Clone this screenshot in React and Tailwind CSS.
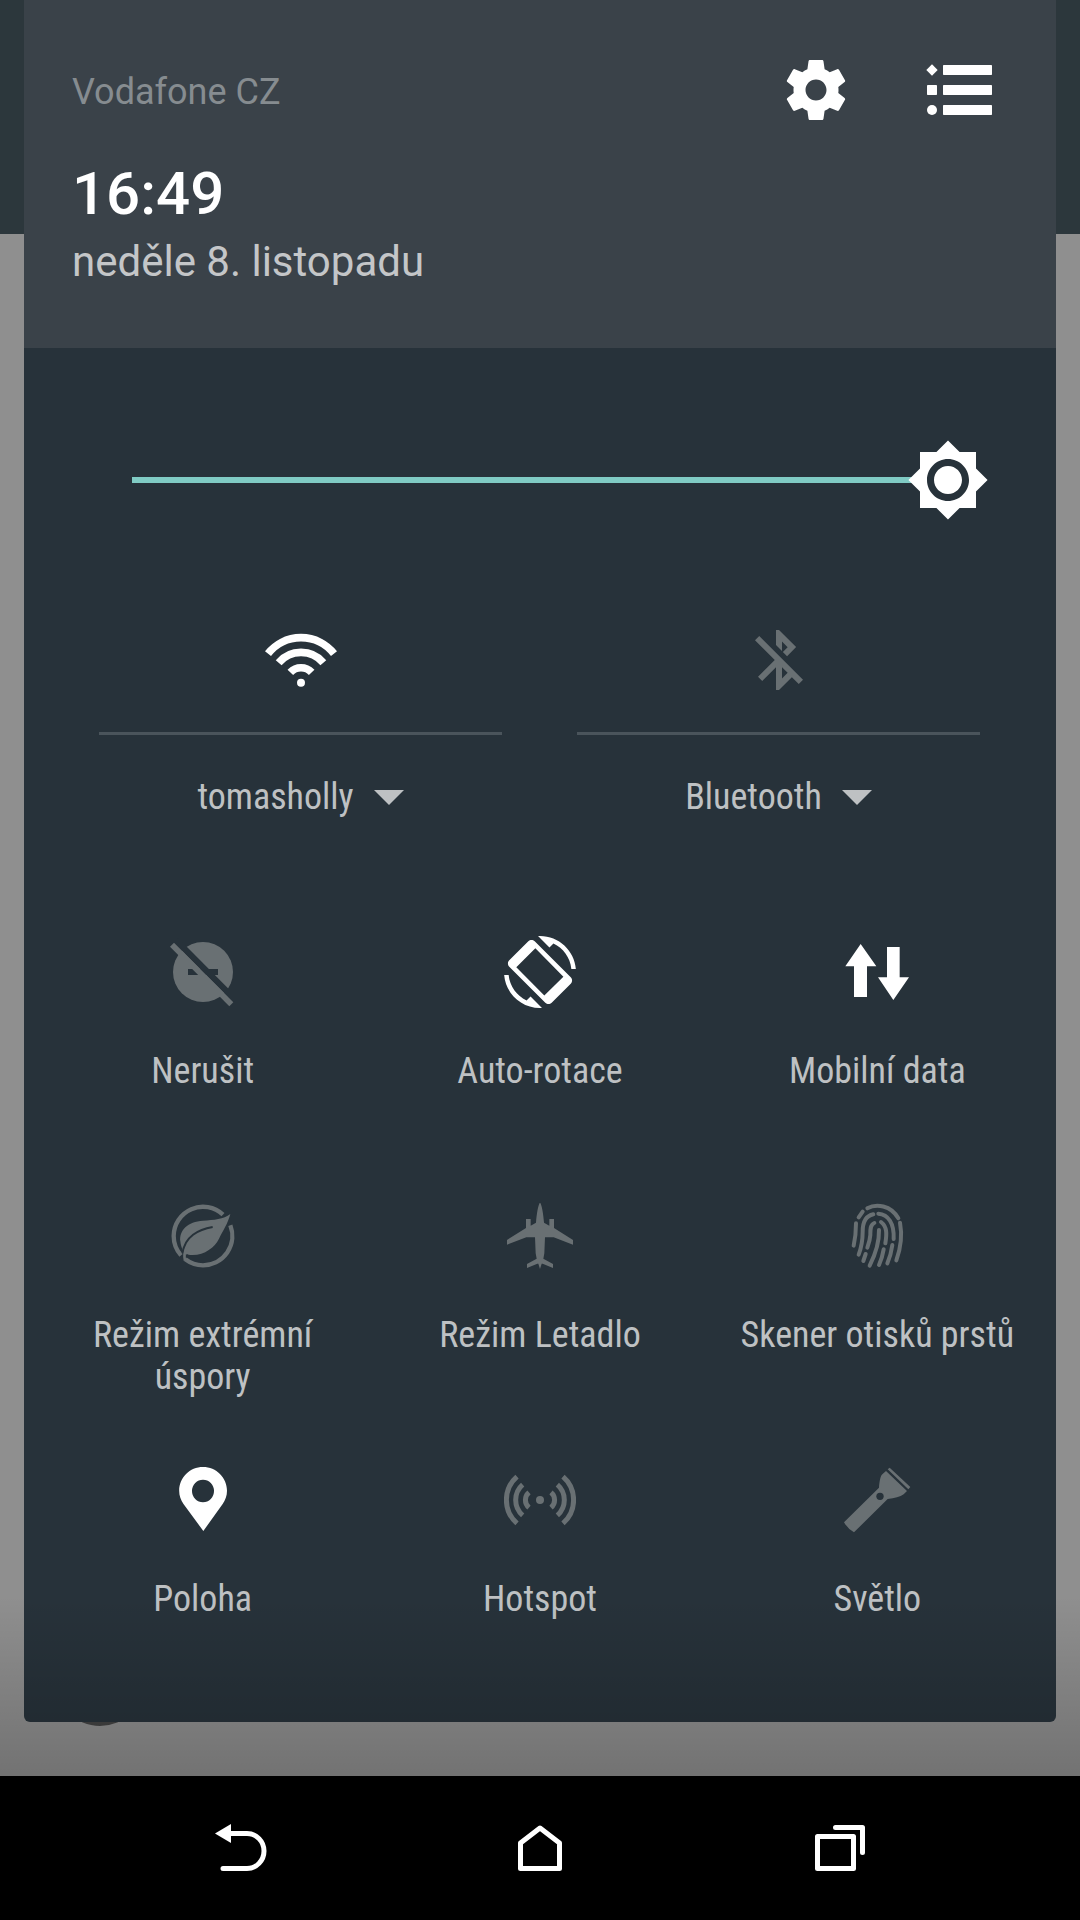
import React, { useState } from "react";

const Icon = ({ children, box = 216, className = "size-[72px]" }) => (
  <svg
    viewBox={`0 0 ${box} ${box}`}
    fill="currentColor"
    aria-hidden="true"
    className={`shrink-0 ${className}`}
  >
    {children}
  </svg>
);

const Strokes = ({ paths, width }) => (
  <g fill="none" stroke="currentColor" strokeWidth={width}>
    {paths.map((d) => (
      <path key={d} d={d} />
    ))}
  </g>
);

const SettingsIcon = () => (
  <Icon box={24}>
    <path d="M19.43 12.98c.04-.32.07-.64.07-.98s-.03-.66-.07-.98l2.11-1.65c.19-.15.24-.42.12-.64l-2-3.46c-.12-.22-.39-.3-.61-.22l-2.49 1c-.52-.4-1.08-.73-1.69-.98l-.38-2.65C14.46 2.18 14.25 2 14 2h-4c-.25 0-.46.18-.49.42l-.38 2.65c-.61.25-1.17.59-1.69.98l-2.49-1c-.23-.09-.49 0-.61.22l-2 3.46c-.13.22-.07.49.12.64l2.11 1.65c-.04.32-.07.65-.07.98s.03.66.07.98l-2.11 1.65c-.19.15-.24.42-.12.64l2 3.46c.12.22.39.3.61.22l2.49-1c.52.4 1.08.73 1.69.98l.38 2.65c.03.24.24.42.49.42h4c.25 0 .46-.18.49-.42l.38-2.65c.61-.25 1.17-.59 1.69-.98l2.49 1c.23.09.49 0 .61-.22l2-3.46c.12-.22.07-.49-.12-.64l-2.11-1.65zM12 15.5c-1.93 0-3.5-1.57-3.5-3.5s1.57-3.5 3.5-3.5 3.5 1.57 3.5 3.5-1.57 3.5-3.5 3.5z" />
  </Icon>
);

const ListIcon = () => (
  <Icon>
    <path d="M24 31l17 17-17 17L7 48z" />
    <rect x="9" y="93" width="30" height="30" rx="2" />
    <circle cx="24" cy="168" r="15" />
    <rect x="57" y="33" width="147" height="30" rx="2" />
    <rect x="57" y="93" width="147" height="30" rx="2" />
    <rect x="57" y="153" width="147" height="30" rx="2" />
  </Icon>
);

const BrightnessIcon = () => (
  <Icon box={24} className="size-[84px]">
    <circle cx="12" cy="12" r="7" className="text-[#27323a]" />
    <path d="M20 8.69V4h-4.69L12 .69 8.69 4H4v4.69L.69 12 4 15.31V20h4.69L12 23.31 15.31 20H20v-4.69L23.31 12 20 8.69zM12 18c-3.31 0-6-2.69-6-6s2.69-6 6-6 6 2.69 6 6-2.69 6-6 6zm0-10c-2.21 0-4 1.79-4 4s1.79 4 4 4 4-1.79 4-4-1.79-4-4-4z" />
  </Icon>
);

const WifiIcon = () => (
  <Icon>
    <Strokes
      width={23}
      paths={[
        "M9 89A126 126 0 0 1 207 89",
        "M41 116A88 88 0 0 1 175 116",
        "M76 145A44 44 0 0 1 140 145",
      ]}
    />
    <circle cx="108" cy="176" r="12" />
  </Icon>
);

const BluetoothOffIcon = () => (
  <Icon box={24}>
    <path d="M13 5.83l1.88 1.88-1.6 1.6 1.41 1.41 3.02-3.02L12 2h-1v5.03l2 2v-3.2zM5.41 4L4 5.41 10.59 12 5 17.59 6.41 19 11 14.41V22h1l4.29-4.29 2.3 2.29L20 18.59 5.41 4zM13 18.17v-3.76l1.88 1.88L13 18.17z" />
  </Icon>
);

const DoNotDisturbOffIcon = () => (
  <Icon>
    <circle cx="108" cy="108" r="90" />
    <rect x="63" y="99" width="90" height="18" fill="#27323a" />
    <path fill="#27323a" d="M21 20L199 199l13-13L34 7z" />
    <path d="M21 20L9 32l178 179 12-12z" />
  </Icon>
);

const RotationIcon = () => (
  <Icon box={24}>
    <path d="M16.48 2.52c3.27 1.55 5.61 4.72 5.97 8.48h1.5C23.44 4.84 18.29 0 12 0l-.66.03 3.81 3.81 1.33-1.32zM7.52 21.48C4.25 19.94 1.91 16.76 1.55 13H.05C.56 19.16 5.71 24 12 24l.66-.03-3.81-3.81-1.33 1.32z" />
    <path
      fillRule="evenodd"
      d="M10.23 1.75c-.59-.59-1.54-.59-2.12 0L1.75 8.11c-.59.59-.59 1.54 0 2.12l12.02 12.02c.59.59 1.54.59 2.12 0l6.36-6.36c.59-.59.59-1.54 0-2.12L10.23 1.75zM13.44 19.8L4.1 10.45l6.35-6.35 9.35 9.45z"
    />
  </Icon>
);

const MobileDataIcon = () => (
  <Icon>
    <path d="M59 24l47 67H78v92H39V91H13zM157 192l-46-68h27V33h38v91h28z" />
  </Icon>
);

const LeafIcon = () => (
  <Icon>
    <Strokes
      width={13}
      paths={[
        "M168 44A88 88 0 0 0 20 108A88 88 0 0 0 42 166",
        "M190 76A88 88 0 0 1 108 196A88 88 0 0 1 55 178",
      ]}
    />
    <path d="M190 42C170 58 140 60 108 62C62 64 36 92 40 124C41 136 44 144 50 156C52 163 60 165 75 165C112 166 143 142 156 116C169 90 182 72 190 42z" />
    <path
      d="M137 81C95 88 52 110 47 160"
      fill="none"
      stroke="#27323a"
      strokeWidth="6"
    />
    <path
      d="M54 182C50 165 52 155 60 142"
      fill="none"
      stroke="currentColor"
      strokeWidth="8"
    />
  </Icon>
);

const AirplaneIcon = () => (
  <Icon>
    <path d="M108 8C103 12 98 40 96 68L80 77V57H66V84L9 120V134L67 112H93L95 160L98 176L69 192V204L100 191H103L108 207L113 191H116L147 204V192L118 176L121 160L123 112H149L207 134V120L150 84V57H136V77L120 68C118 40 113 12 108 8z" />
  </Icon>
);

const FingerprintIcon = () => (
  <Icon>
    <g strokeLinecap="round">
      <Strokes
        width={12}
        paths={[
          "M79 25C105 10 150 15 172 55",
          "M53 52L65 35",
          "M45 70C45 95 43 115 38 137",
          "M97 43C72 48 65 70 65 95C65 125 60 145 53 164",
          "M112 41C142 43 160 70 158 117",
          "M100 69C87 74 88 90 88 105C87 120 83 132 79 143",
          "M120 66C138 80 138 100 133 130",
          "M114 90C115 130 102 165 86 197",
          "M74 162L67 183",
          "M128 148Q124 172 114 195",
          "M154 135Q150 165 139 190",
          "M177 68C184 105 179 145 166 181",
        ]}
      />
    </g>
  </Icon>
);

const LocationIcon = () => (
  <Icon>
    <path
      fillRule="evenodd"
      d="M108 9C68 9 36.5 41 36.5 80c0 15 5 28 13 40L109 201l58-81c8-12 13-25 13-40C180 41 148 9 108 9zM108 47a33 34 0 1 1 0 68 33 34 0 1 1 0-68z"
    />
  </Icon>
);

const HotspotIcon = () => (
  <Icon>
    <Strokes
      width={15}
      paths={[
        "M39 38A93 93 0 0 0 39 178",
        "M56 62A61 61 0 0 0 56 154",
        "M75 85A30 30 0 0 0 75 131",
        "M141 85A30 30 0 0 1 141 131",
        "M160 62A61 61 0 0 1 160 154",
        "M177 38A93 93 0 0 1 177 178",
      ]}
    />
    <circle cx="108" cy="108" r="12" />
  </Icon>
);

const FlashlightIcon = () => (
  <Icon>
    <path d="M9 175L114 71C115 55 118 36 124 31L135 21L198 81L188 91Q172 102 140 105L39 205Q20 194 9 175zM140 16l6-5 62 58-6 7z" />
    <circle cx="117" cy="97" r="11" fill="#27323a" />
  </Icon>
);

const connections = [
  { id: "wifi", label: "tomasholly", icon: WifiIcon, active: true },
  { id: "bluetooth", label: "Bluetooth", icon: BluetoothOffIcon },
];

const tiles = [
  { label: "Nerušit", icon: DoNotDisturbOffIcon },
  { label: "Auto-rotace", icon: RotationIcon, active: true },
  { label: "Mobilní data", icon: MobileDataIcon, active: true },
  { label: "Režim extrémní úspory", icon: LeafIcon },
  { label: "Režim Letadlo", icon: AirplaneIcon },
  { label: "Skener otisků prstů", icon: FingerprintIcon },
  { label: "Poloha", icon: LocationIcon, active: true },
  { label: "Hotspot", icon: HotspotIcon },
  { label: "Světlo", icon: FlashlightIcon },
];

const labelClass =
  "font-['Roboto_Condensed','Roboto',sans-serif] text-[36px] leading-[42px] text-[#bec1c3]";

const Header = () => (
  <header className="bg-[#3a4249] pt-[54px] pr-[60px] pb-[61px] pl-12">
    <div className="flex items-center justify-between">
      <p className="pt-1 text-[36px] leading-[42px] text-[#868c90]">
        Vodafone CZ
      </p>
      <div className="flex gap-[72px] text-white">
        <button type="button" aria-label="Nastavení">
          <SettingsIcon />
        </button>
        <button type="button" aria-label="Oznámení">
          <ListIcon />
        </button>
      </div>
    </div>
    <h1 className="mt-[33px] text-[60px] leading-[70px] font-medium text-white">
      16:49
    </h1>
    <p className="mt-2 text-[42px] leading-[50px] text-[#c4c6c8]">
      neděle 8. listopadu
    </p>
  </header>
);

const BrightnessSlider = () => {
  const [brightness, setBrightness] = useState(100);

  return (
    <div className="relative mx-[108px] mt-[90px] flex h-[84px] items-center">
      <div
        className="absolute left-0 h-[6px] bg-[#80cbc4]"
        style={{ width: `${brightness}%` }}
      />
      <input
        type="range"
        min="0"
        max="100"
        aria-label="Jas"
        value={brightness}
        onChange={(e) => setBrightness(Number(e.target.value))}
        className="h-[84px] w-full appearance-none bg-transparent [&::-webkit-slider-thumb]:size-px [&::-webkit-slider-thumb]:appearance-none"
      />
      <div
        className="pointer-events-none absolute -translate-x-1/2 text-white"
        style={{ left: `${brightness}%` }}
      >
        <BrightnessIcon />
      </div>
    </div>
  );
};

const Connection = ({ label, icon: TileIcon, active }) => (
  <div className="flex flex-col items-center">
    <button
      type="button"
      aria-label={label}
      aria-pressed={Boolean(active)}
      className={`flex w-full justify-center border-b-[3px] border-[#4a545b] pb-9 ${
        active ? "text-white" : "text-[#697073]"
      }`}
    >
      <TileIcon />
    </button>
    <button
      type="button"
      className={`mt-[41px] flex items-center gap-5 ${labelClass}`}
    >
      {label}
      <svg
        viewBox="0 0 30 15"
        fill="currentColor"
        aria-hidden="true"
        className="h-[15px] w-[30px]"
      >
        <path d="M0 0h30L15 15z" />
      </svg>
    </button>
  </div>
);

const Tile = ({ label, icon: TileIcon, active }) => (
  <button
    type="button"
    aria-pressed={Boolean(active)}
    className="flex min-h-[264px] flex-col items-center gap-[42px] px-6 pt-[30px]"
  >
    <span className={active ? "text-white" : "text-[#697073]"}>
      <TileIcon />
    </span>
    <span className={labelClass}>{label}</span>
  </button>
);

const NavBar = () => (
  <nav className="grid h-[144px] grid-cols-3 place-items-center bg-black px-[90px] text-white">
    <button type="button" aria-label="Zpět">
      <Icon box={72}>
        <path d="M11 21.5L27 12v19z" />
        <path
          d="M26 21.5H43a17 17.5 0 0 1 0 35H19"
          fill="none"
          stroke="currentColor"
          strokeWidth="5"
          strokeLinecap="round"
        />
      </Icon>
    </button>
    <button type="button" aria-label="Domů">
      <Icon box={72}>
        <path
          d="M16.5 56.5V31L36 16l19.5 15v25.5z"
          fill="none"
          stroke="currentColor"
          strokeWidth="5"
          strokeLinejoin="round"
        />
      </Icon>
    </button>
    <button type="button" aria-label="Poslední aplikace">
      <Icon box={72}>
        <g
          fill="none"
          stroke="currentColor"
          strokeWidth="5"
          strokeLinejoin="round"
          strokeLinecap="round"
        >
          <rect x="13.5" y="24.5" width="36" height="32" />
          <path d="M31.5 15.5h27v25" />
        </g>
      </Icon>
    </button>
  </nav>
);

const App = () => {
  return (
    <div className="flex min-h-screen flex-col font-['Roboto',sans-serif]">
      <main className="relative flex-1 bg-[linear-gradient(#2c373c_234px,#8f8f8f_234px)] px-6 pb-[54px]">
        <div className="absolute bottom-[50px] left-[55px] size-[90px] rounded-full bg-[#434343]" />
        <section className="relative overflow-hidden rounded-b-md bg-[#27323a]">
          <Header />
          <BrightnessSlider />
          <div className="mt-[102px] grid grid-cols-2 gap-[75px] pr-[76px] pl-[75px]">
            {connections.map((item) => (
              <Connection key={item.id} {...item} />
            ))}
          </div>
          <div className="mt-[88px] grid grid-cols-3 px-[10px] pb-6">
            {tiles.map((tile) => (
              <Tile key={tile.label} {...tile} />
            ))}
          </div>
        </section>
        {/* scrim above the navigation bar */}
        <div className="pointer-events-none absolute inset-x-0 bottom-0 h-[180px] bg-linear-to-b from-transparent to-black/20" />
      </main>
      <NavBar />
    </div>
  );
};

export default App;
